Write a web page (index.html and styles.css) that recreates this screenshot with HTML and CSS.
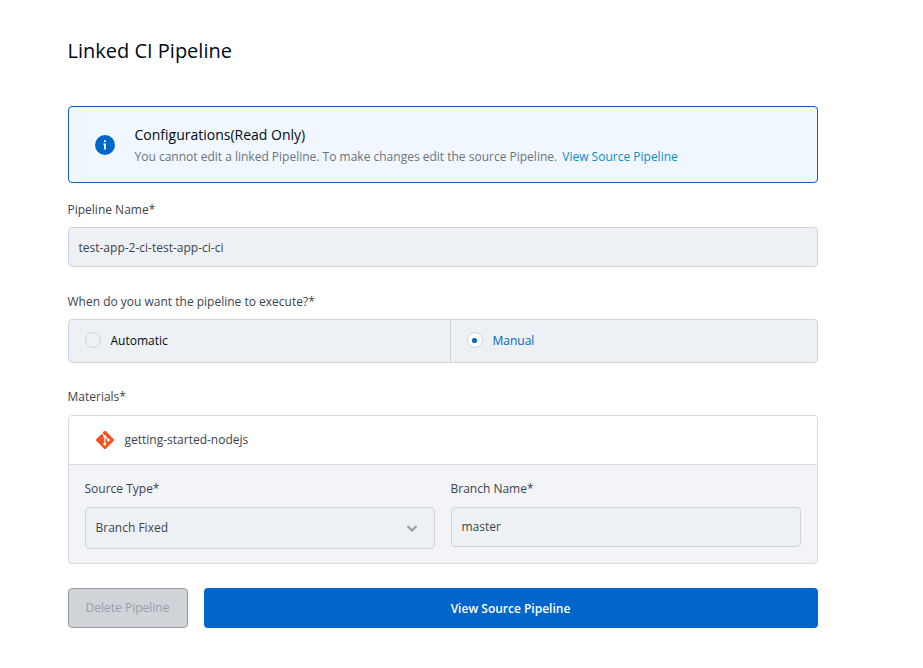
FILE: index.html
```html
<!DOCTYPE html>
<html lang="en">
<head>
<meta charset="utf-8">
<title>Linked CI Pipeline</title>
<link rel="stylesheet" href="styles.css">
</head>
<body>
<main class="page">
  <h1>Linked CI Pipeline</h1>
  <section class="info">
    <svg class="info-icon" viewBox="0 0 20 20"><circle cx="10" cy="10" r="10" fill="#06c"/><path d="M8.3 8.5h2.6v6H9.1V9.7h-.8zM9 5.2h1.9v1.9H9z" fill="#fff"/></svg>
    <div>
      <h2>Configurations(Read Only)</h2>
      <p>You cannot edit a linked Pipeline. To make changes edit the source Pipeline. <a>View Source Pipeline</a></p>
    </div>
  </section>
  <label class="label name-label">Pipeline Name*</label>
  <div class="field name">test-app-2-ci-test-app-ci-ci</div>
  <label class="label exec-label">When do you want the pipeline to execute?*</label>
  <div class="radios">
    <div class="option auto"><span class="radio"></span>Automatic</div>
    <div class="option manual"><span class="radio on"></span>Manual</div>
  </div>
  <label class="label mat-label">Materials*</label>
  <section class="material">
    <div class="repo">
      <svg class="git" viewBox="0 0 20 20"><rect x="3.2" y="3.2" width="13.6" height="13.6" rx="1.2" transform="rotate(45 10 10)" fill="#f4511e"/><path d="M6.8 3.2L9.8 6.2v8M9.8 6.5l3.6 3.6" stroke="#fff" stroke-width="1.2" fill="none"/><circle cx="9.8" cy="6.4" r="1.5" fill="#fff"/><circle cx="9.8" cy="14" r="1.5" fill="#fff"/><circle cx="13.3" cy="10" r="1.5" fill="#fff"/></svg>
      <span>getting-started-nodejs</span>
    </div>
    <div class="source">
      <div><label class="label">Source Type*</label><div class="field select">Branch Fixed<svg class="chevron" viewBox="0 0 12 8"><path d="M1.5 2L6 6.5 10.5 2" fill="none" stroke="#999" stroke-width="2"/></svg></div></div>
      <div><label class="label">Branch Name*</label><div class="field">master</div></div>
    </div>
  </section>
  <div class="actions"><button class="delete">Delete Pipeline</button><button class="view">View Source Pipeline</button></div>
</main>
</body>
</html>
```
FILE: styles.css
```css
* { box-sizing: border-box; }
body { margin: 0; background: #fff; color: #3b444c; font: 12px/20px "Open Sans", sans-serif; }
.page { width: 750px; margin-left: 67.5px; padding-top: 36px; }
h1, h2, p { margin: 0; font-weight: 400; color: #000a14; }
h1 { font-size: 20px; line-height: 30px; margin-bottom: 40px; }
.info { height: 77px; display: flex; align-items: center; gap: 20px; padding: 0 26px; border: 1px solid #0762b8; border-radius: 4px; background: #f0f7ff; }
.info-icon { width: 20px; height: 20px; }
h2 { font-size: 14px; line-height: 21px; }
.info p { color: #6b747d; line-height: 20px; padding-top: 2px; margin-bottom: -1px; }
.info a { color: #0b8fc9; margin-left: 2px; }
.label { display: block; }
.name-label { margin: 17px 0 7px; }
.field { height: 40px; padding: 0 10px; display: flex; align-items: center; border: 1px solid #d0d4d9; border-radius: 4px; background: #edf1f5; }
.name { padding-top: 2px; }
.exec-label { margin: 25px 0 7px; }
.radios { display: flex; height: 44px; border: 1px solid #d0d4d9; border-radius: 4px; background: #edf1f5; }
.option { display: flex; align-items: center; gap: 10px; padding-left: 16px; padding-bottom: 1px; color: #000a14; }
.auto { width: 382px; border-right: 1px solid #d0d4d9; }
.manual { color: #06c; }
.radio { width: 16px; height: 16px; margin-bottom: 1px; border: 1px solid #d0d4d9; border-radius: 50%; display: grid; place-items: center; }
.on { background: #fff; }
.on::after { content: ""; width: 5px; height: 5px; border-radius: 2px; background: #06c; }
.mat-label { margin: 24px 0 8px; }
.material { height: 149px; border: 1px solid #d6dbdf; border-radius: 4px; background: #f3f4f8; overflow: hidden; }
.repo { height: 49px; display: flex; align-items: center; gap: 10px; padding-left: 26px; background: #fff; border-bottom: 1px solid #d6dbdf; }
.git { width: 20px; height: 20px; }
.source { display: grid; grid-template-columns: 350px 350px; gap: 16px; padding: 14px 16px; }
.source .label { margin-bottom: 8px; }
.select { height: 42px; justify-content: space-between; padding-right: 16px; }
.chevron { width: 12px; height: 8px; }
.actions { display: flex; gap: 16px; margin-top: 24px; }
button { height: 40px; border-radius: 4px; font: 12px/20px "Open Sans", sans-serif; }
.delete { width: 120px; border: 1px solid #999da3; background: #d0d4d9; color: #999fa5; }
.view { flex: 1; border: 0; padding-top: 3px; background: #06c; color: #fff; font-weight: 600; }
```
